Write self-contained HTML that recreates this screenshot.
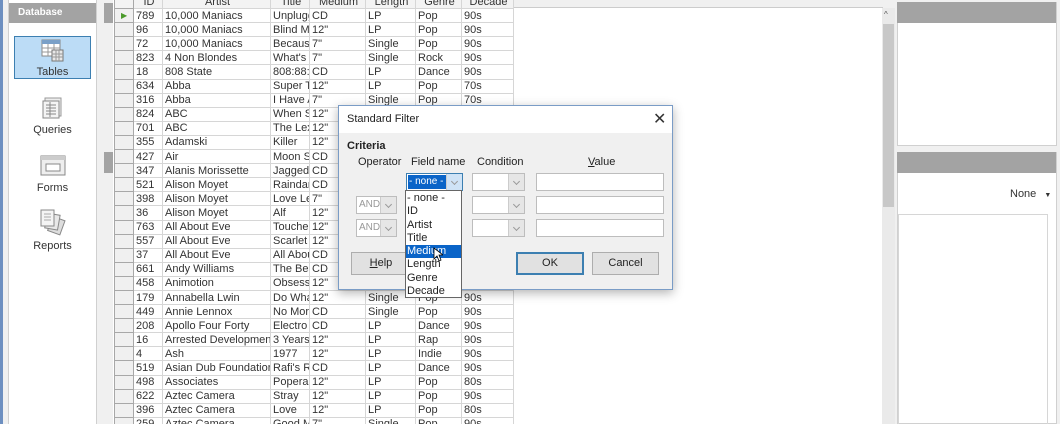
<!DOCTYPE html>
<html><head><meta charset="utf-8"><style>
*{box-sizing:border-box;margin:0;padding:0}
html,body{width:1060px;height:424px;overflow:hidden}
body{background:#f0f0f0;font-family:"Liberation Sans",sans-serif;font-size:11px;color:#222;position:relative}
.abs{position:absolute}
table{border-collapse:collapse;table-layout:fixed;position:absolute;left:114px;top:-6px;background:#fff;width:399px}
td{height:14.1px;border:1px solid #d6d6d6;padding:0 0 0 2px;white-space:nowrap;overflow:hidden;line-height:12px;font-size:11px;color:#333}
td.rh{background:#f0f0f0;border-color:#a8a8a8}
tr.h td{background:#f3f3f3;text-align:center;color:#333}
.lbl{position:absolute;width:89px;text-align:center;font-size:11px;color:#333}
.dlg{position:absolute;left:338px;top:105px;width:335px;height:185px;background:#f0f0f0;border:1px solid #7a9cc6;box-shadow:0 3px 10px rgba(0,0,0,.3)}
.combo{position:absolute;height:18px;background:#fff;border:1px solid #bdbdbd;overflow:hidden}
.combo .ar{position:absolute;right:0;top:0;width:16px;height:16px;background:#e6e6e6;border-left:1px solid #ccc}
.combo .ar:after{content:"";position:absolute;left:5px;top:5px;width:4px;height:4px;border-right:1px solid #999;border-bottom:1px solid #999;transform:rotate(45deg)}
.inp{position:absolute;height:18px;background:#fff;border:1px solid #bdbdbd;left:197px;width:128px}
.btn{position:absolute;height:23px;background:#e1e1e1;border:1px solid #adadad;text-align:center;line-height:21px;font-size:11px}
</style></head><body>
<div class="abs" style="left:0;top:0;width:3px;height:424px;background:#6d8fc0"></div>
<div class="abs" style="left:8px;top:0;width:89px;height:424px;background:#fff;border-left:1px solid #d0d0d0;border-right:1px solid #d0d0d0"></div>
<div class="abs" style="left:9px;top:3px;width:87px;height:20px;background:#a3a3a3;color:#fff;font-weight:bold;font-size:10px;line-height:20px;padding-left:9px">Database</div>
<div class="abs" style="left:14px;top:36px;width:77px;height:43px;background:#bcdcf6;border:1px solid #3c7fb1"></div>
<svg class="abs" style="left:40px;top:38px" width="26" height="26" viewBox="0 0 26 26"><rect x="2" y="2" width="18" height="16" fill="#fff" stroke="#888"/><rect x="2" y="2" width="18" height="4" fill="#7aa0c8"/><path d="M2 10h18M2 14h18M8 6v12M14 6v12" stroke="#999"/><rect x="12" y="12" width="11" height="11" fill="#e8e8e8" stroke="#777"/><path d="M12 16h11M12 19h11M16 12v11M19 12v11" stroke="#999"/></svg>
<div class="lbl" style="left:8px;top:66px">Tables</div>
<svg class="abs" style="left:41px;top:96px" width="24" height="24" viewBox="0 0 24 24"><rect x="4" y="2" width="16" height="18" fill="#eee" stroke="#999"/><rect x="2" y="5" width="16" height="17" fill="#f4f4f4" stroke="#888"/><path d="M5 9h10M5 12h10M5 15h10M5 18h10M9 6v15" stroke="#888"/></svg>
<div class="lbl" style="left:8px;top:124px">Queries</div>
<svg class="abs" style="left:40px;top:155px" width="26" height="22" viewBox="0 0 26 22"><rect x="1" y="1" width="24" height="19" fill="#eee" stroke="#888"/><rect x="1" y="1" width="24" height="4" fill="#ccc"/><rect x="6" y="9" width="14" height="7" fill="#fff" stroke="#888"/></svg>
<div class="lbl" style="left:8px;top:182px">Forms</div>
<svg class="abs" style="left:38px;top:208px" width="28" height="28" viewBox="0 0 28 28"><rect x="12" y="10" width="13" height="15" fill="#ddd" stroke="#888" transform="rotate(20 18 17)"/><rect x="8" y="6" width="13" height="15" fill="#e8e8e8" stroke="#888" transform="rotate(10 14 13)"/><rect x="3" y="2" width="13" height="16" fill="#f4f4f4" stroke="#888"/><path d="M6 6h7M6 9h7M6 12h7" stroke="#aaa"/></svg>
<div class="lbl" style="left:8px;top:240px">Reports</div>
<div class="abs" style="left:104px;top:3px;width:9px;height:20px;background:#a3a3a3"></div>
<div class="abs" style="left:104px;top:152px;width:9px;height:21px;background:#a3a3a3"></div>
<div class="abs" style="left:113px;top:0;width:770px;height:424px;background:#fff"></div>
<div class="abs" style="left:513px;top:0;width:370px;height:8px;background:#f0f0f0;border-bottom:1px solid #ccc"></div>
<table>
<colgroup><col style="width:19px"><col style="width:29px"><col style="width:108px"><col style="width:39px"><col style="width:56px"><col style="width:50px"><col style="width:46px"><col style="width:52px"></colgroup>
<tr class="h"><td class="rh"></td><td>ID</td><td>Artist</td><td>Title</td><td>Medium</td><td>Length</td><td>Genre</td><td>Decade</td></tr>
<tr><td class="rh" style="color:#4a9a2a;font-size:8px;padding-left:6px">▶</td><td>789</td><td>10,000 Maniacs</td><td>Unplugged</td><td>CD</td><td>LP</td><td>Pop</td><td>90s</td></tr>
<tr><td class="rh"></td><td>96</td><td>10,000 Maniacs</td><td>Blind Man</td><td>12"</td><td>LP</td><td>Pop</td><td>90s</td></tr>
<tr><td class="rh"></td><td>72</td><td>10,000 Maniacs</td><td>Because</td><td>7"</td><td>Single</td><td>Pop</td><td>90s</td></tr>
<tr><td class="rh"></td><td>823</td><td>4 Non Blondes</td><td>What's Up</td><td>7"</td><td>Single</td><td>Rock</td><td>90s</td></tr>
<tr><td class="rh"></td><td>18</td><td>808 State</td><td>808:88:98</td><td>CD</td><td>LP</td><td>Dance</td><td>90s</td></tr>
<tr><td class="rh"></td><td>634</td><td>Abba</td><td>Super Trouper</td><td>12"</td><td>LP</td><td>Pop</td><td>70s</td></tr>
<tr><td class="rh"></td><td>316</td><td>Abba</td><td>I Have A</td><td>7"</td><td>Single</td><td>Pop</td><td>70s</td></tr>
<tr><td class="rh"></td><td>824</td><td>ABC</td><td>When Smokey</td><td>12"</td><td>LP</td><td>Pop</td><td>80s</td></tr>
<tr><td class="rh"></td><td>701</td><td>ABC</td><td>The Lexicon</td><td>12"</td><td>LP</td><td>Pop</td><td>80s</td></tr>
<tr><td class="rh"></td><td>355</td><td>Adamski</td><td>Killer</td><td>12"</td><td>Single</td><td>Dance</td><td>90s</td></tr>
<tr><td class="rh"></td><td>427</td><td>Air</td><td>Moon Safari</td><td>CD</td><td>LP</td><td>Dance</td><td>90s</td></tr>
<tr><td class="rh"></td><td>347</td><td>Alanis Morissette</td><td>Jagged Little</td><td>CD</td><td>LP</td><td>Rock</td><td>90s</td></tr>
<tr><td class="rh"></td><td>521</td><td>Alison Moyet</td><td>Raindancing</td><td>CD</td><td>LP</td><td>Pop</td><td>80s</td></tr>
<tr><td class="rh"></td><td>398</td><td>Alison Moyet</td><td>Love Letters</td><td>7"</td><td>Single</td><td>Pop</td><td>80s</td></tr>
<tr><td class="rh"></td><td>36</td><td>Alison Moyet</td><td>Alf</td><td>12"</td><td>LP</td><td>Pop</td><td>80s</td></tr>
<tr><td class="rh"></td><td>763</td><td>All About Eve</td><td>Touched</td><td>12"</td><td>LP</td><td>Rock</td><td>80s</td></tr>
<tr><td class="rh"></td><td>557</td><td>All About Eve</td><td>Scarlet and</td><td>12"</td><td>LP</td><td>Rock</td><td>80s</td></tr>
<tr><td class="rh"></td><td>37</td><td>All About Eve</td><td>All About</td><td>CD</td><td>LP</td><td>Rock</td><td>80s</td></tr>
<tr><td class="rh"></td><td>661</td><td>Andy Williams</td><td>The Best</td><td>CD</td><td>LP</td><td>Pop</td><td>60s</td></tr>
<tr><td class="rh"></td><td>458</td><td>Animotion</td><td>Obsession</td><td>12"</td><td>Single</td><td>Pop</td><td>80s</td></tr>
<tr><td class="rh"></td><td>179</td><td>Annabella Lwin</td><td>Do What</td><td>12"</td><td>Single</td><td>Pop</td><td>90s</td></tr>
<tr><td class="rh"></td><td>449</td><td>Annie Lennox</td><td>No More</td><td>CD</td><td>Single</td><td>Pop</td><td>90s</td></tr>
<tr><td class="rh"></td><td>208</td><td>Apollo Four Forty</td><td>Electro Glide</td><td>CD</td><td>LP</td><td>Dance</td><td>90s</td></tr>
<tr><td class="rh"></td><td>16</td><td>Arrested Development</td><td>3 Years,</td><td>12"</td><td>LP</td><td>Rap</td><td>90s</td></tr>
<tr><td class="rh"></td><td>4</td><td>Ash</td><td>1977</td><td>12"</td><td>LP</td><td>Indie</td><td>90s</td></tr>
<tr><td class="rh"></td><td>519</td><td>Asian Dub Foundation</td><td>Rafi's Revenge</td><td>CD</td><td>LP</td><td>Dance</td><td>90s</td></tr>
<tr><td class="rh"></td><td>498</td><td>Associates</td><td>Popera</td><td>12"</td><td>LP</td><td>Pop</td><td>80s</td></tr>
<tr><td class="rh"></td><td>622</td><td>Aztec Camera</td><td>Stray</td><td>12"</td><td>LP</td><td>Pop</td><td>90s</td></tr>
<tr><td class="rh"></td><td>396</td><td>Aztec Camera</td><td>Love</td><td>12"</td><td>LP</td><td>Pop</td><td>80s</td></tr>
<tr><td class="rh"></td><td>259</td><td>Aztec Camera</td><td>Good Morning</td><td>7"</td><td>Single</td><td>Pop</td><td>90s</td></tr>
</table>
<div class="abs" style="left:882px;top:8px;width:13px;height:416px;background:#eaeaea"></div>
<div class="abs" style="left:883px;top:24px;width:11px;height:183px;background:#c8c8c8"></div>
<div class="abs" style="left:884px;top:10px;font-size:8px;color:#555">^</div>
<div class="abs" style="left:897px;top:2px;width:160px;height:144px;background:#fff;border:1px solid #d0d0d0"></div>
<div class="abs" style="left:897px;top:2px;width:159px;height:21px;background:#a3a3a3"></div>
<div class="abs" style="left:897px;top:152px;width:160px;height:272px;background:#fff;border:1px solid #d0d0d0"></div>
<div class="abs" style="left:897px;top:152px;width:159px;height:21px;background:#a3a3a3"></div>
<div class="abs" style="left:1010px;top:188px;font-size:11px;color:#333">None <span style="font-size:7px;margin-left:5px">▼</span></div>
<div class="abs" style="left:898px;top:214px;width:150px;height:210px;border:1px solid #d6d6d6;border-bottom:none"></div>
<div class="dlg">
 <div class="abs" style="left:0;top:0;width:333px;height:27px;background:#fff;padding:7px 0 0 8px;font-size:11px">Standard Filter</div>
 <div class="abs" style="left:314px;top:3px;font-size:16px;color:#333">✕</div>
 <div class="abs" style="left:8px;top:34px;font-weight:bold;font-size:11px">Criteria</div>
 <div class="abs" style="left:19px;top:50px">Operator</div>
 <div class="abs" style="left:72px;top:50px">Field name</div>
 <div class="abs" style="left:138px;top:50px">Condition</div>
 <div class="abs" style="left:249px;top:50px"><u>V</u>alue</div>
 <div class="combo" style="left:67px;top:67px;width:57px;border-color:#3c7fb1"><div class="abs" style="left:1px;top:1px;width:39px;height:14px;background:#0a64c8;color:#fff;line-height:14px;font-size:10px;padding-left:1px;white-space:nowrap">- none -</div><div class="ar" style="background:#cfe3f6"></div></div>
 <div class="combo" style="left:133px;top:67px;width:53px"><div class="ar"></div></div>
 <div class="inp" style="top:67px"></div>
 <div class="combo" style="left:17px;top:90px;width:41px;color:#999;line-height:16px;padding-left:2px;font-size:10px">AND<div class="ar"></div></div>
 <div class="combo" style="left:133px;top:90px;width:53px"><div class="ar"></div></div>
 <div class="inp" style="top:90px"></div>
 <div class="combo" style="left:17px;top:113px;width:41px;color:#999;line-height:16px;padding-left:2px;font-size:10px">AND<div class="ar"></div></div>
 <div class="combo" style="left:133px;top:113px;width:53px"><div class="ar"></div></div>
 <div class="inp" style="top:113px"></div>
 <div class="btn" style="left:12px;top:146px;width:60px"><u>H</u>elp</div>
 <div class="btn" style="left:177px;top:146px;width:68px;border:2px solid #3c7fb1;line-height:19px">OK</div>
 <div class="btn" style="left:253px;top:146px;width:67px">Cancel</div>
</div>
<div class="abs" style="left:405px;top:190px;width:57px;height:108px;background:#fff;border:1px solid #666;line-height:13.3px;font-size:11px;padding-top:1px">
 <div style="padding-left:1px">- none -</div><div style="padding-left:1px">ID</div><div style="padding-left:1px">Artist</div><div style="padding-left:1px">Title</div>
 <div style="padding-left:1px;background:#0a64c8;color:#fff">Medium</div>
 <div style="padding-left:1px">Length</div><div style="padding-left:1px">Genre</div><div style="padding-left:1px">Decade</div>
</div>
<svg class="abs" style="left:433px;top:247px" width="10" height="15" viewBox="0 0 10 15"><path d="M1 1v11l3-3 2 5 2-1-2-5h4z" fill="#fff" stroke="#000" stroke-width="0.8"/></svg>
</body></html>
